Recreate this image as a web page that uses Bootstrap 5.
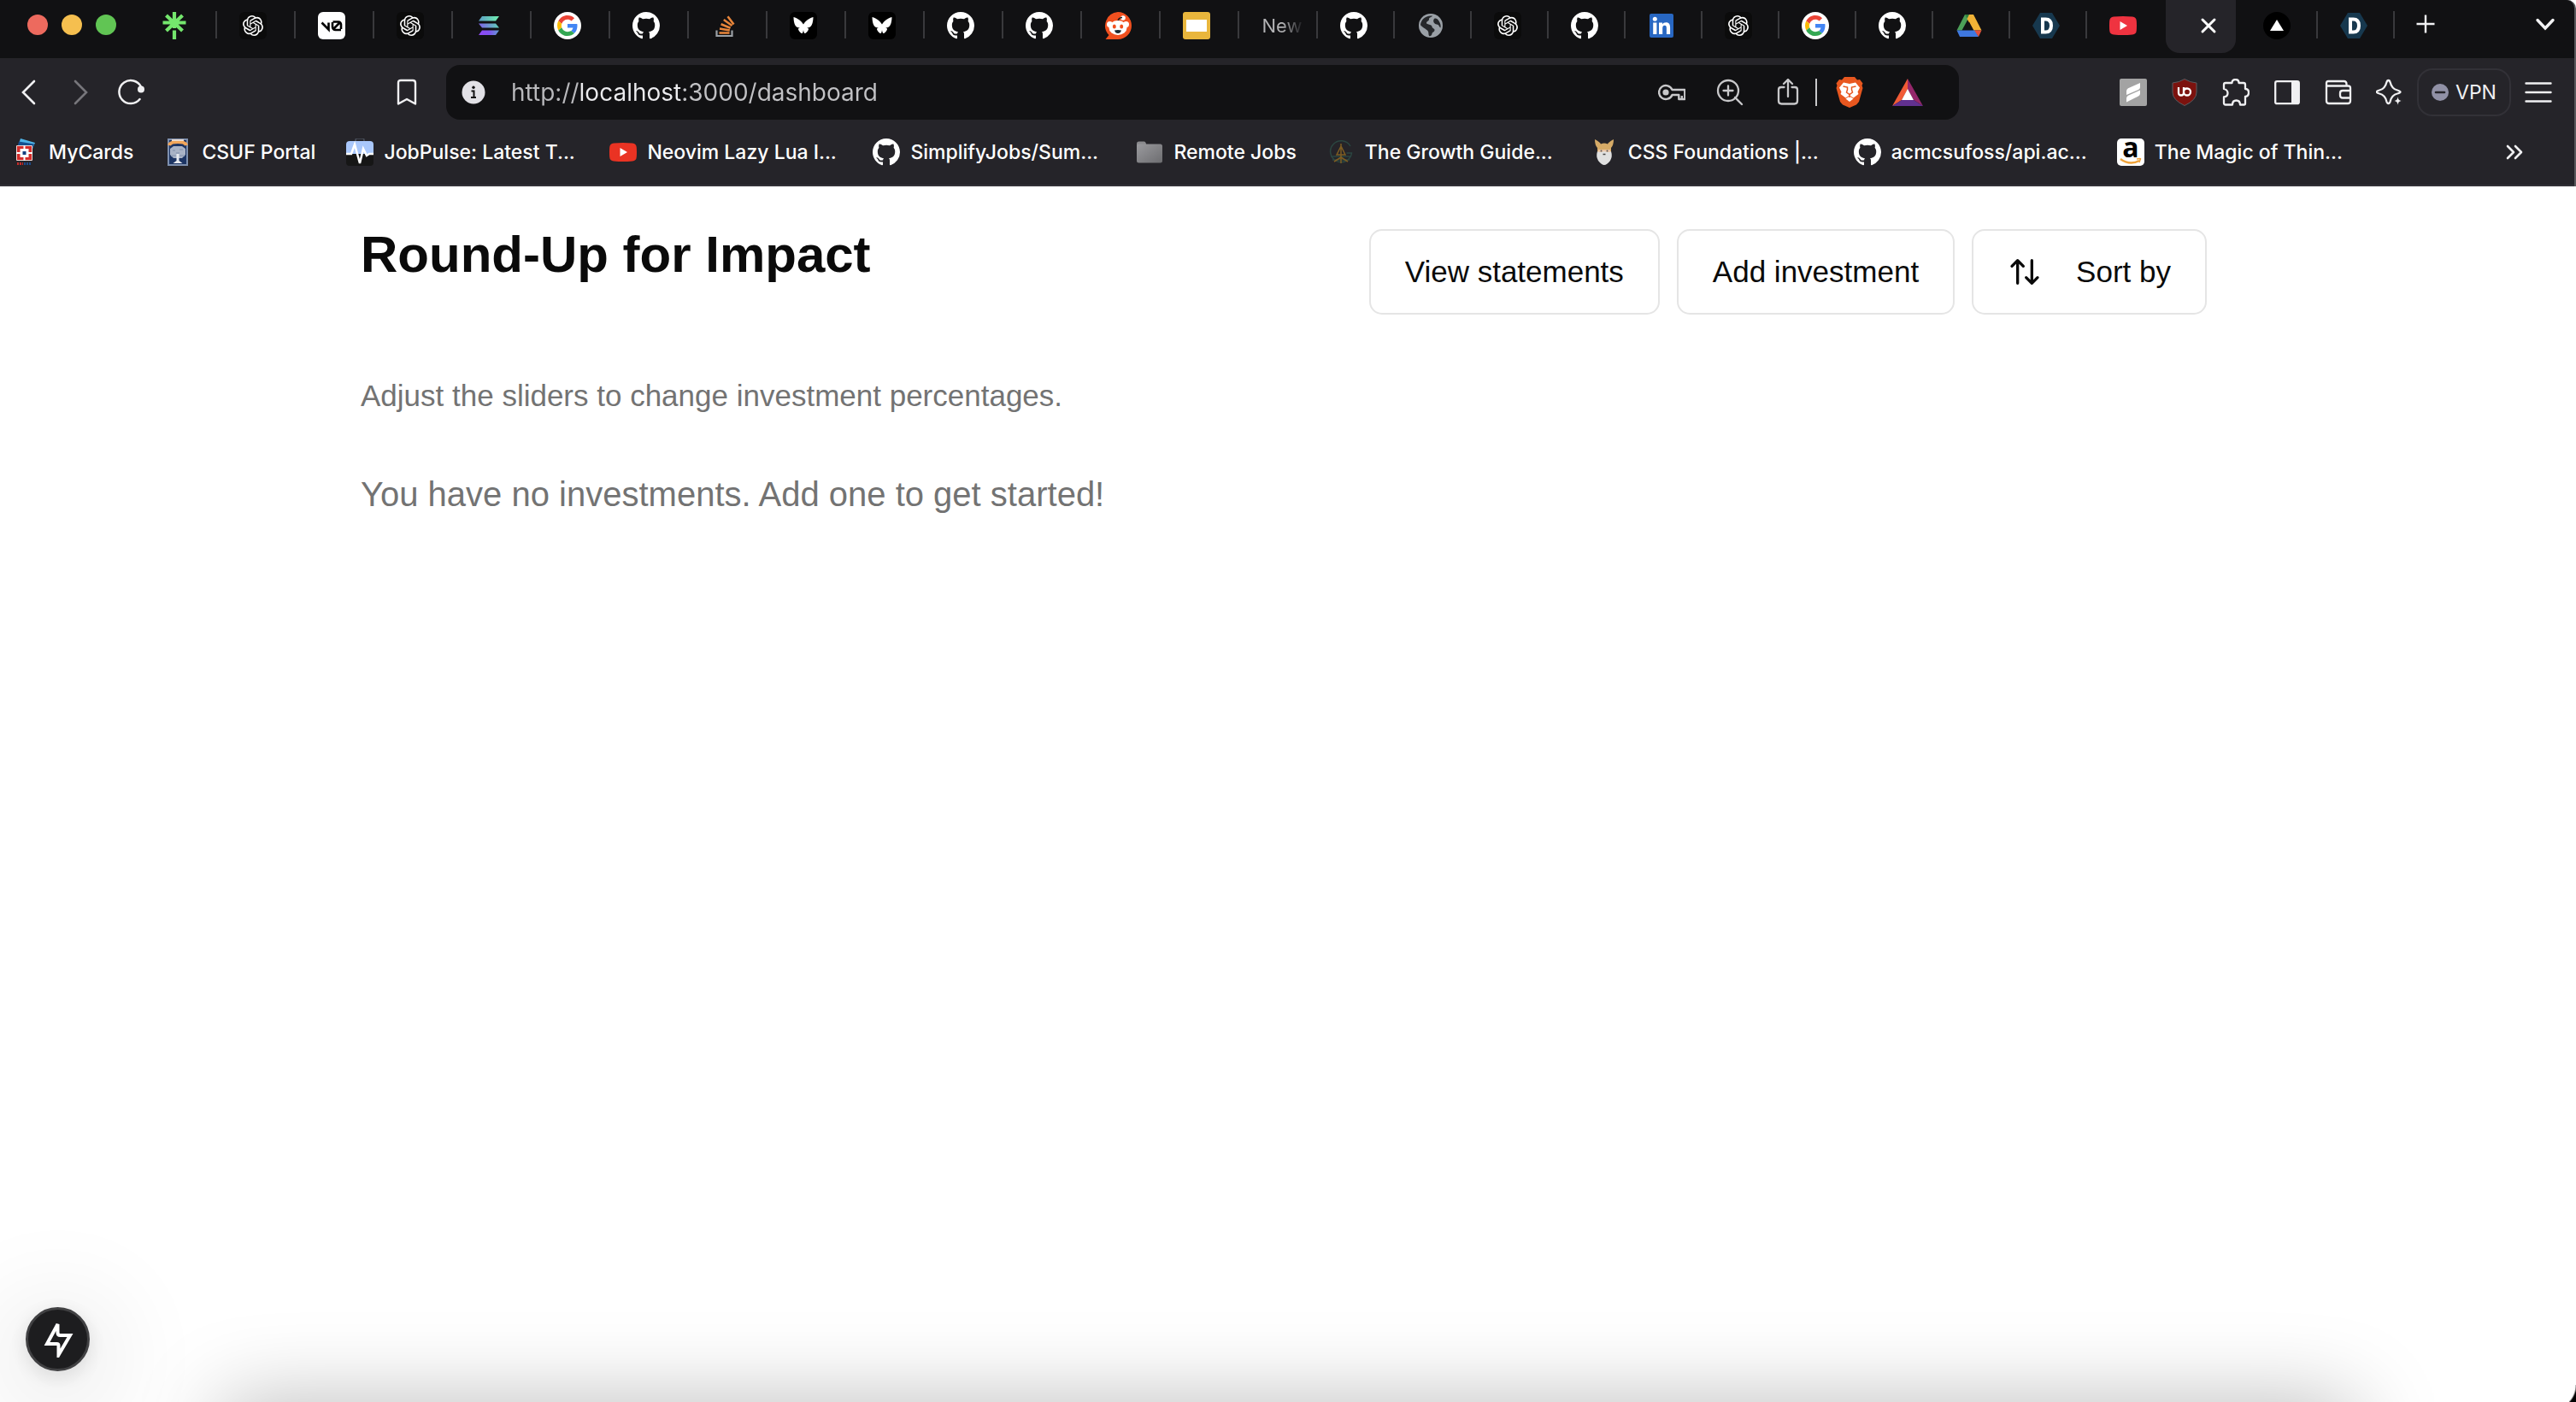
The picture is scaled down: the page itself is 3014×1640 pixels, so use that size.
<!DOCTYPE html>
<html lang="en">
<head>
<meta charset="utf-8">
<meta name="viewport" content="width=device-width, initial-scale=1">
<title>Round-Up for Impact</title>
<link href="https://cdn.jsdelivr.net/npm/bootstrap@5.3.0/dist/css/bootstrap.min.css" rel="stylesheet">
<style>
  body { font-family: "Liberation Sans", Arial, sans-serif; color: #0a0a0a; background: #fff; }
  .ico { width: 32px; height: 32px; flex: none; display: block; overflow: visible; }
  .ico-tall { height: 36px; }
  .ico-wide { width: 36px; }
  button { color: inherit; }
  .plain { background: none; border: 0; padding: 0; }

  /* browser chrome */
  .browser { font-family: Inter, Roboto, sans-serif; background: #252429; color: #f0f0f2; border-right: 2px solid #58585b; border-top-right-radius: 10px; border-bottom: 0; }
  .tabstrip { background: #111113; height: 68px; padding-left: 32px; border-top-right-radius: 10px; }
  .lights { gap: 16px; width: 130px; height: 58px; }
  .light { width: 24px; height: 24px; border-radius: 50%; }
  .light-red { background: #ed6a5e; }
  .light-amber { background: #f5bf4f; }
  .light-green { background: #61c554; }
  .tab { width: 92px; height: 60px; padding-right: 8px; flex: none; position: relative; }
  .tab.slim { width: 90px; padding-right: 6px; }
  .tab.titled { padding: 0 0 0 8px; }
  .tab::after { content: ""; position: absolute; right: 0; top: 13px; width: 2px; height: 32px; background: #39393c; }
  .tab.bare::after { display: none; }
  .tab-text { font-size: 22px; line-height: 32px; color: transparent; background: linear-gradient(90deg, #b4b4b6 50%, #29292c 95%); -webkit-background-clip: text; background-clip: text; }
  .tab.open { width: 82px; margin: 0 6px 0 2px; height: 62px; padding: 0 0 2px 18px; background: #252429; border-radius: 0 0 16px 16px; }
  .tab-tools { height: 56px; flex: 1; padding: 0 18px 0 20px; }

  .toolbar { height: 80px; padding: 0 26px 0 18px; }
  .nav-left { width: 504px; padding-right: 30px; }
  .nav-left button + button { margin-left: 28px; }
  .address { height: 64px; border-radius: 16px; background: #111113; padding: 0 42px 0 16px; min-width: 0; flex: 0 1 1770px; }
  .address input { flex: 1; min-width: 0; border: 0; outline: 0; padding: 0; margin-left: 28px; font-size: 28px; line-height: 40px; color: transparent; background: linear-gradient(90deg, #b9b9bc 80px, #ececef 80px, #ececef 199px, #c2c2c5 199px); -webkit-background-clip: text; background-clip: text; }
  .address .tools { gap: 36px; color: #c8c8ca; }
  .address .bar { width: 2px; height: 32px; background: #c8c8ca; margin: 0 22px 0 16px; }
  .address .badges { gap: 34px; }
  .exts { gap: 28px; }
  .vpn { width: 110px; height: 56px; border: 2px solid #323137; border-radius: 18px; font-size: 23px; gap: 8px; margin: 0 16px; }

  .bookmarks { height: 70px; padding: 0 54px 8px 13px; border-bottom: 2px solid #323137; }
  .mark-link { font-size: 23px; font-weight: 500; line-height: 32px; color: #fff; text-decoration: none; gap: 12px; padding-right: 36px; white-space: nowrap; flex: none; }
  .mark-link.long { width: 308px; padding-right: 0; }

  /* dashboard */
  .page { padding-right: 10px; }
  .sheet { width: 100%; max-width: 2160px; padding-top: 50px; }
  .headline { font-size: 60px; line-height: 60px; font-weight: 700; }
  .act { height: 100px; border: 2px solid #e5e5e5; border-radius: 15px; background: #fff; padding: 0 40px; font-size: 35px; line-height: 50px; color: #0a0a0a; }
  .act .ico { width: 40px; height: 40px; margin-right: 40px; }
  .acts { gap: 20px; }
  .hint { font-size: 35px; line-height: 50px; margin-top: 70px; }
  .empty { font-size: 40px; line-height: 60px; margin-top: 60px; }
  .hint, .empty { color: #737373; }

  /* overlays on the viewport edge */
  .dev { position: fixed; left: 30px; bottom: 36px; width: 75px; height: 75px; border-radius: 50%; border: 3px solid #414143; background: #1d1d1f; z-index: 3;
    box-shadow: 0 6px 24px rgba(0,0,0,.12), 0 22px 120px 30px rgba(0,0,0,.09); }
  .dev .ico { width: 42px; height: 42px; }
  .undershade { position: fixed; left: 270px; right: 270px; bottom: -100px; height: 90px; box-shadow: 0 0 100px 10px rgba(0,0,0,.27); }
  .corner { position: fixed; right: 0; bottom: 0; width: 8px; height: 20px; background: radial-gradient(circle at -21px 0, transparent 28px, #000 30px); }
</style>
<script src="https://cdn.jsdelivr.net/npm/bootstrap@5.3.0/dist/js/bootstrap.bundle.min.js"></script>
</head>
<body>

<svg width="0" height="0" class="position-absolute" aria-hidden="true">
  <defs>
    <linearGradient id="gs1" x1="0" y1="0" x2="1" y2="0"><stop offset="0" stop-color="#5c9dc4"/><stop offset="1" stop-color="#6ff0b0"/></linearGradient>
    <linearGradient id="gs2" x1="0" y1="0" x2="1" y2="0"><stop offset="0" stop-color="#7d62e8"/><stop offset="1" stop-color="#5fd0b8"/></linearGradient>
    <linearGradient id="gs3" x1="0" y1="0" x2="1" y2="0"><stop offset="0" stop-color="#9148f5"/><stop offset=".5" stop-color="#8050f0"/><stop offset="1" stop-color="#629cd0"/></linearGradient>
    <linearGradient id="gf" x1="0" y1="0" x2="1" y2="1"><stop offset="0" stop-color="#9a9a9e"/><stop offset="1" stop-color="#6d6d70"/></linearGradient>
  </defs>
  <symbol id="linktree" viewBox="0 0 32 32"><path d="M16 0v19M2.500 12.500h27M6.500 4l19 18M25.500 4l-19 18M16 21.500V32" fill="none" stroke="#74e66d" stroke-width="4.200"/></symbol>
  <symbol id="gpt" viewBox="0 0 32 32"><rect width="32" height="32" rx="6" fill="#0b0b0b"/><path transform="translate(4 4)" fill="#fff" d="M22.2819 9.8211a5.9847 5.9847 0 0 0-.5157-4.9108 6.0462 6.0462 0 0 0-6.5098-2.9A6.0651 6.0651 0 0 0 4.9807 4.1818a5.9847 5.9847 0 0 0-3.9977 2.9 6.0462 6.0462 0 0 0 .7427 7.0966 5.98 5.98 0 0 0 .511 4.9107 6.051 6.051 0 0 0 6.5146 2.9001A5.9847 5.9847 0 0 0 13.2599 24a6.0557 6.0557 0 0 0 5.7718-4.2058 5.9894 5.9894 0 0 0 3.9977-2.9001 6.0557 6.0557 0 0 0-.7475-7.0729zm-9.022 12.6081a4.4755 4.4755 0 0 1-2.8764-1.0408l.1419-.0804 4.7783-2.7582a.7948.7948 0 0 0 .3927-.6813v-6.7369l2.02 1.1686a.071.071 0 0 1 .038.052v5.5826a4.504 4.504 0 0 1-4.4945 4.4944zm-9.6607-4.1254a4.4708 4.4708 0 0 1-.5346-3.0137l.142.0852 4.783 2.7582a.7712.7712 0 0 0 .7806 0l5.8428-3.3685v2.3324a.0804.0804 0 0 1-.0332.0615L9.74 19.9502a4.4992 4.4992 0 0 1-6.1408-1.6464zM2.3408 7.8956a4.485 4.485 0 0 1 2.3655-1.9728V11.6a.7664.7664 0 0 0 .3879.6765l5.8144 3.3543-2.0201 1.1685a.0757.0757 0 0 1-.071 0l-4.8303-2.7865A4.504 4.504 0 0 1 2.3408 7.872zm16.5963 3.8558L13.1038 8.364 15.1192 7.2a.0757.0757 0 0 1 .071 0l4.8303 2.7913a4.4944 4.4944 0 0 1-.6765 8.1042v-5.6772a.79.79 0 0 0-.407-.667zm2.0107-3.0231l-.142-.0852-4.7735-2.7818a.7759.7759 0 0 0-.7854 0L9.409 9.2297V6.8974a.0662.0662 0 0 1 .0284-.0615l4.8303-2.7866a4.4992 4.4992 0 0 1 6.6802 4.66zM8.3065 12.863l-2.02-1.1638a.0804.0804 0 0 1-.038-.0567V6.0742a4.4992 4.4992 0 0 1 7.3757-3.4537l-.142.0805L8.704 5.459a.7948.7948 0 0 0-.3927.6813zm1.0976-2.3654l2.602-1.4998 2.6069 1.4998v2.9994l-2.5974 1.4997-2.6067-1.4997Z"/></symbol>
  <symbol id="vzero" viewBox="0 0 32 32"><rect width="32" height="32" rx="6" fill="#fff"/><path d="M4.500 12.500l8 8V12.500M17 12v5.500a3.500 3.500 0 0 0 3.500 3.500H27M17.500 11.500h6.500a3 3 0 0 1 3 3V20M17.500 20.500L26 12" fill="none" stroke="#000" stroke-width="2.600"/></symbol>
  <symbol id="solana" viewBox="0 0 32 32"><path d="M8 5h20l-4 5.500H4z" fill="url(#gs1)"/><path d="M4 13.500h20l4 5H8z" fill="url(#gs2)"/><path d="M8 21.500h20L24 27H4z" fill="url(#gs3)"/></symbol>
  <symbol id="google" viewBox="0 0 32 32"><circle cx="16" cy="16" r="16" fill="#fff"/><g transform="translate(4 4) scale(.5)"><path fill="#ea4335" d="M24 9.500c3.540 0 6.710 1.220 9.210 3.600l6.850-6.850C35.900 2.380 30.470 0 24 0 14.620 0 6.510 5.380 2.560 13.220l7.980 6.190C12.430 13.720 17.740 9.500 24 9.500z"/><path fill="#4285f4" d="M46.980 24.550c0-1.570-.15-3.090-.38-4.550H24v9.020h12.940c-.58 2.960-2.260 5.480-4.780 7.180l7.730 6c4.510-4.180 7.090-10.360 7.090-17.650z"/><path fill="#fbbc05" d="M10.530 28.590c-.48-1.450-.76-2.990-.76-4.590s.27-3.140.76-4.590l-7.980-6.190C.92 16.460 0 20.120 0 24s.92 7.540 2.560 10.780l7.970-6.190z"/><path fill="#34a853" d="M24 48c6.480 0 11.930-2.130 15.890-5.810l-7.730-6c-2.150 1.450-4.920 2.300-8.160 2.300-6.260 0-11.570-4.220-13.470-9.910l-7.980 6.190C6.510 42.620 14.620 48 24 48z"/></g></symbol>
  <symbol id="github" viewBox="0 0 16 16"><path fill="#fff" d="M8 0C3.580 0 0 3.580 0 8c0 3.540 2.290 6.530 5.470 7.590.4.070.55-.17.55-.38 0-.19-.01-.82-.01-1.490-2.010.37-2.530-.49-2.690-.94-.09-.23-.48-.94-.82-1.130-.28-.15-.68-.52-.01-.53.63-.01 1.080.58 1.230.82.72 1.210 1.870.87 2.330.66.07-.52.28-.87.51-1.070-1.780-.2-3.640-.89-3.640-3.950 0-.87.31-1.590.82-2.150-.08-.2-.36-1.020.08-2.120 0 0 .67-.21 2.200.82.64-.18 1.320-.27 2-.27s1.360.09 2 .27c1.530-1.040 2.200-.82 2.200-.82.44 1.100.16 1.920.08 2.120.51.56.82 1.270.82 2.150 0 3.070-1.870 3.750-3.650 3.950.29.25.54.73.54 1.480 0 1.070-.01 1.930-.01 2.200 0 .21.15.46.55.38A8.010 8.010 0 0 0 16 8c0-4.420-3.580-8-8-8z"/></symbol>
  <symbol id="stack" viewBox="0 0 32 32"><path d="M6.500 21.500V28h18v-6.500" fill="none" stroke="#9ba1a6" stroke-width="2.200"/><path d="M9.500 24.500h12M10 19.500l11.800 2M11.600 14.200l11 4.500M14.800 9l9.700 7M19.500 5.200l7 9.300" fill="none" stroke="#e8853a" stroke-width="2.600"/></symbol>
  <symbol id="bsky" viewBox="0 0 32 32"><rect width="32" height="32" rx="6" fill="#000"/><path fill="#fff" d="M16 14.500C14 11 9 7 4.500 6c0 4 1 11 4.500 12 1 .4 2 .4 3 .3-2 .7-2.500 1.700-1.500 3.200 1.500 2.500 3 3.800 4 3.500.8-.4 1.200-2 1.500-4 .3 2 .7 3.600 1.500 4 1 .3 2.500-1 4-3.500 1-1.500.5-2.500-1.500-3.200 1 .1 2 .1 3-.3 3.500-1 4.500-8 4.500-12C23 7 18 11 16 14.500z"/></symbol>
  <symbol id="reddit" viewBox="0 0 32 32"><path fill="#f0501f" d="M16 0a16 16 0 1 1 0 32H1.500l4-5A16 16 0 0 1 16 0z"/><circle cx="6.500" cy="14.500" r="3.500" fill="#fff"/><circle cx="25.500" cy="14.500" r="3.500" fill="#fff"/><circle cx="22" cy="7" r="2.800" fill="#fff"/><path d="M16 12c0-4 2-5.500 5-5.500" stroke="#222" stroke-width="1.500" fill="none"/><ellipse cx="16" cy="18.500" rx="10.500" ry="8.500" fill="#fff"/><ellipse cx="11.800" cy="17" rx="2" ry="2.600" fill="#f0501f"/><ellipse cx="20.200" cy="17" rx="2" ry="2.600" fill="#f0501f"/><path d="M12 21.500q4-1 8 0-1 3.500-4 3.500t-4-3.500z" fill="#1a2a32"/></symbol>
  <symbol id="slides" viewBox="0 0 32 32"><rect width="32" height="32" rx="3" fill="#e9b63c"/><path d="M4 9h24v14H4z" fill="#fff"/></symbol>
  <symbol id="globe" viewBox="0 0 32 32"><circle cx="16" cy="16" r="14" fill="#9aa0a6"/><path fill="#26282b" d="M18 4.500c-1 2-4 1.500-4 4s-3 2-3 4.500c0 2 6 1 6.500 4 0 2.500 3.500 2 3 4.500s-2.500 1.500-3 4-2 3-3.500 2.500c-1-2 0-4-1.500-6S5 17.500 4 15c.5-6 6-11.500 14-10.500zM20 8c2-1 4 0 5.500 2.500 2 3.500 2.500 5 2 8-2-1-1.500-4-4.500-4s-5-4-3-6.500z"/></symbol>
  <symbol id="linkedin" viewBox="0 0 32 32"><rect x="2" y="2" width="28" height="28" rx="2" fill="#2867c2"/><circle cx="8.300" cy="8.300" r="2.500" fill="#fff"/><path fill="#fff" d="M6.200 12.500h4.200V26H6.200zM13 12.500h4v1.900c.8-1.300 2.200-2.200 4.200-2.200 4 0 4.900 2.600 4.900 6.200V26h-4.200v-6.700c0-1.700-.2-3.500-2.200-3.500s-2.500 1.500-2.500 3.400V26H13z"/></symbol>
  <symbol id="drive" viewBox="0 0 32 32"><path fill="#4d9f58" d="M11 3h6.500L7.500 21.500h-6z"/><path fill="#2f7d3d" d="M11 3h10l-5 8z"/><path fill="#f0b236" d="M16 3h5l9.500 18.500H21L13.500 8z"/><path fill="#3f78e0" d="M1.500 21.500h21.500l4 7.500H5z"/><path fill="#e2503c" d="M22 21.500h8.500L27 29z"/><path fill="#111113" d="M16 11.500l5 9.500H11z"/></symbol>
  <symbol id="dhex" viewBox="0 0 32 32"><path fill="#17384e" d="M9 1h14l9 15-9 15H9L0 16z"/><path fill="none" stroke="#fff" stroke-width="4" d="M12 8.500h3.500q6.500 0 6.500 7.500t-6.500 7.500H12z"/></symbol>
  <symbol id="yt" viewBox="0 0 32 32"><path fill="#ef3340" d="M5 5.500q11-1 22 0 4.500.3 4.800 5 .4 5.500 0 11-.3 4.700-4.800 5-11 1-22 0-4.500-.3-4.800-5-.4-5.500 0-11 .3-4.700 4.800-5z"/><path fill="#fff" d="M12.500 11l8.500 5-8.500 5z"/></symbol>
  <symbol id="vercel" viewBox="0 0 32 32"><circle cx="16" cy="16" r="16" fill="#000"/><path fill="#fff" d="M16 9l8 13H8z"/></symbol>
  <symbol id="close" viewBox="0 0 32 32"><path d="M9 9l14 14M23 9L9 23" fill="none" stroke="#fff" stroke-width="3" stroke-linecap="round"/></symbol>
  <symbol id="plus" viewBox="0 0 32 32"><path d="M16 5.500v21M5.500 16h21" stroke="#f2f2f4" stroke-width="2.400" fill="none"/></symbol>
  <symbol id="down" viewBox="0 0 32 32"><path d="M7 11.500l9 9.500 9-9.500" stroke="#f2f2f4" stroke-width="3.400" fill="none" stroke-linecap="round"/></symbol>

  <symbol id="back" viewBox="0 0 32 32"><path d="M22 3L9 16l13 13" stroke="#f0f0f2" stroke-width="2.600" fill="none" stroke-linecap="round"/></symbol>
  <symbol id="fwd" viewBox="0 0 32 32"><path d="M10 3l13 13-13 13" stroke="#77767b" stroke-width="2.600" fill="none" stroke-linecap="round"/></symbol>
  <symbol id="reload" viewBox="0 0 32 32"><path d="M25.500 24A13.500 13.500 0 1 1 27 9.500" stroke="#f0f0f2" stroke-width="2.500" fill="none" stroke-linecap="round"/><circle cx="27" cy="12.500" r="4" fill="#f0f0f2"/></symbol>
  <symbol id="flag" viewBox="0 0 32 32"><path d="M6 5q0-3 3-3h14q3 0 3 3v24.500L16 24 6 29.500z" stroke="#f0f0f2" stroke-width="2.400" fill="none" stroke-linejoin="round"/></symbol>
  <symbol id="info" viewBox="0 0 32 32"><circle cx="16" cy="16" r="13.500" fill="#e2e1e6"/><circle cx="16" cy="10.200" r="1.700" fill="#111"/><path d="M13.500 14.500h3v7M13 22h6" stroke="#111" stroke-width="2" fill="none"/></symbol>
  <symbol id="key" viewBox="0 0 32 32"><g fill="none" stroke="currentColor" stroke-width="2.400" stroke-linejoin="round"><path d="M16.500 13h14.800v11h-7v-5h-7.800A8 8 0 1 1 16.500 13z"/><path d="M27.800 20v4" /></g><circle cx="9" cy="16" r="3.600" fill="currentColor"/></symbol>
  <symbol id="zoomin" viewBox="0 0 32 32"><path d="M22 22l8 8M14 8.500v11M8.500 14h11" stroke="currentColor" stroke-width="2.300" fill="none" stroke-linecap="round"/><circle cx="14" cy="14" r="12" stroke="currentColor" stroke-width="2.300" fill="none"/></symbol>
  <symbol id="share" viewBox="0 0 32 32"><path d="M11.500 10H8q-3 0-3 3v13q0 3.500 3.500 3.500h15q3.500 0 3.500-3.500V13q0-3-3-3h-3.500M16 21V1.500M11 6l5-5 5 5" stroke="currentColor" stroke-width="2.300" fill="none" stroke-linecap="round" stroke-linejoin="round"/></symbol>
  <symbol id="brave" viewBox="0 0 32 36"><path fill="#e8571f" d="M10 0h12l3 3.500 3-.5 3.500 4.500-1 2.500 1 3-4.500 16-3 3.500L16 36l-8-3.500L5 29 .5 13l1-3-1-2.500L4 3l3 .5z"/><path fill="#fff" d="M9 6.500L16 8l7-1.500 5 6-2.500 5 1 2.500-6 4.500L16 21.500 11.500 24.500l-6-4.500 1-2.500-2.500-5z"/><path fill="#fff" d="M16 22.500l4.500 3-4.500 3.500-4.500-3.500z"/><path d="M8.500 11l5 1v3l-1 3 3.500 2.500 3.500-2.500-1-3v-3l5-1M16 20.500v3.500" fill="none" stroke="#e8571f" stroke-width="1.500"/></symbol>
  <symbol id="bat" viewBox="0 0 36 32"><path fill="#f15b36" d="M18 0v12.500L11 25 0 32z"/><path fill="#94276a" d="M18 0l18 32-11-7-7-12.500z"/><path fill="#61308f" d="M0 32l11-7h14l11 7z"/><path fill="#fff" d="M18 12l7 13H11z"/></symbol>
  <symbol id="simplify" viewBox="0 0 32 32"><rect width="32" height="32" rx="2" fill="#a3a3a3"/><path fill="#fff" d="M8 14.500q0-2 2-3.200L24 5v5q0 2-2 3L8 19zM8 23q0-2 2-3.200L24 13.500v4q0 2-2 3L8 27.500z"/></symbol>
  <symbol id="ublock" viewBox="0 0 32 32"><path fill="#7c120e" stroke="#5c5c60" stroke-width="1" d="M16 .5q6.500 4 14 4.500v11q0 9-14 15.500Q2 25 2 16V5q7.500-.5 14-4.500z"/><path d="M9 10v6.500q0 3 3 3t3-3V10M15 15.500a4 4 0 1 0 4-4q-4 0-4 4" fill="none" stroke="#fff" stroke-width="2.300"/></symbol>
  <symbol id="puzzle" viewBox="0 0 32 32"><path d="M4 5h7.500q0-4 4-4t4 4H25q2 0 2 2v5q4 0 4 4.300T27 21v8q0 1.500-1.500 1.500h-4.500q0-5-4.500-5t-4.500 5H4q-2 0-2-2v-7q4.500-.5 4.500-4.500T2 12V7q0-2 2-2z" fill="none" stroke="#f0f0f2" stroke-width="2.300" stroke-linejoin="round"/></symbol>
  <symbol id="sidebar" viewBox="0 0 32 32"><rect x="2.200" y="3.200" width="27.600" height="26" rx="2" fill="none" stroke="#f0f0f2" stroke-width="2.300"/><path d="M21 3h9v26h-9z" fill="#f0f0f2"/></symbol>
  <symbol id="wallet" viewBox="0 0 32 32"><g fill="none" stroke="#f0f0f2" stroke-width="2.300" stroke-linejoin="round"><path d="M25.500 8.500V6q0-3-3-3H4Q2 3 2 5v21q0 3 3 3h22q3 0 3-3V11q0-2.500-2.500-2.500H2"/><path d="M30 14h-9q-3 0-3 3v2.500q0 3 3 3h9"/></g></symbol>
  <symbol id="spark" viewBox="0 0 32 32"><path d="M14.500 2q1.500 0 2.200 2.500Q18.500 12 25 13.500q3.500 1 3.500 2t-3.500 2q-6.500 1.500-8.300 9Q16 29 14.500 29t-2.200-2.500Q10.500 19 4 17.500q-3.500-1-3.500-2t3.500-2q6.500-1.500 8.300-9Q13 2 14.500 2z" fill="none" stroke="#f0f0f2" stroke-width="2.300"/><path d="M25.500 20.500l1.500 4 4 1.500-4 1.500-1.500 4-1.500-4-4-1.500 4-1.500z" fill="#f0f0f2" stroke="#252429" stroke-width="1"/></symbol>
  <symbol id="minus" viewBox="0 0 20 20"><circle cx="10" cy="10" r="10" fill="#9191a6"/><path d="M5 10h10" stroke="#252429" stroke-width="2.600" stroke-linecap="round"/></symbol>
  <symbol id="menu" viewBox="0 0 32 32"><path d="M1.500 5.500h29M1.500 16h29M1.500 26.500h29" stroke="#f0f0f2" stroke-width="2.400" stroke-linecap="round"/></symbol>

  <symbol id="mycards" viewBox="0 0 32 32"><path fill="#4fb4e8" d="M11 0l17 5-6 14L7 12z"/><path fill="#14508f" d="M9 3.500l18 3L22 20 7 14z"/><path fill="#d32d2b" stroke="#f1d6d2" stroke-width="1" d="M6.500 8.500h18v17h-18z"/><path d="M15.500 8v18M6 17h19" stroke="#fff" stroke-width="2"/><path fill="#16407f" stroke="#fff" stroke-width="3" d="M12 13.500h7v7h-7z"/><path d="M7 29.500h7" stroke="#c92a28" stroke-width="3" stroke-dasharray="2 1"/><path d="M15 29.500h9" stroke="#1c4a8a" stroke-width="3" stroke-dasharray="2 1"/></symbol>
  <symbol id="csuf" viewBox="0 0 32 32"><path fill="#1d3564" d="M4 1h24v31H4z"/><path d="M5 1h22v30H5z" fill="none" stroke="#7d8fae" stroke-width="2"/><path d="M6 8q1-4 10-4t10 4" fill="none" stroke="#f2a65a" stroke-width="4"/><path d="M9 2h14" stroke="#e9d9cc" stroke-width="2"/><path d="M7 12l4-3h10l4 3v7l-4 4H11l-4-4z" fill="#a9b3c6"/><path d="M8 20h6M18 20h6M10 14h3M18 13h4M14 17h4" stroke="#94a1b8" stroke-width="2"/><path d="M14.500 18h3v8l4 3h-11l4-3z" fill="#e6e9ef"/></symbol>
  <symbol id="pulse" viewBox="0 0 32 32"><path d="M11 4V2q0-2 2-2h6q2 0 2 2v2" fill="none" stroke="#4a4f5a" stroke-width="1.500"/><rect y="3" width="32" height="29" rx="4" fill="#161616"/><path fill="#a9c7fb" d="M4 3h24q4 0 4 4v11H0V7q0-4 4-4z"/><path d="M0 18h6l4-11 6 22 4-17 4 8 3-2h5" fill="none" stroke="#fff" stroke-width="2.500"/></symbol>
  <symbol id="ytb" viewBox="0 0 32 32"><path fill="#ea3323" d="M5 5.500q11-1 22 0 4.500.3 4.800 5 .4 5.500 0 11-.3 4.700-4.800 5-11 1-22 0-4.500-.3-4.800-5-.4-5.500 0-11 .3-4.700 4.800-5z"/><path fill="#fff" d="M12.500 11l8.500 5-8.500 5z"/></symbol>
  <symbol id="folder" viewBox="0 0 32 32"><path fill="#8a8a8d" d="M1 6q0-2.500 2.500-2.500h6q2 0 2.500 3V10H1z"/><rect x="1" y="6.500" width="30" height="22" rx="2.500" fill="url(#gf)"/></symbol>
  <symbol id="growth" viewBox="0 0 32 32"><path d="M27 9A12.500 12.500 0 1 0 28.500 17h-6M4 21h24M6 25h20" fill="none" stroke="#2b4641" stroke-width="1.500"/><path d="M16 6v23M16 9l-5 10h10zM8 27l8-5 8 5" fill="none" stroke="#7d5c22" stroke-width="1.500"/></symbol>
  <symbol id="odin" viewBox="0 0 32 32"><path fill="#d6ab67" d="M5 1q6 3 7 5.500 4-2 8 0Q21 4 27 1q0 7-3 10v5H8v-5Q5 8 5 1z"/><path fill="#ecc7a8" d="M9 13h14v6H9z"/><path fill="#e0e0e0" d="M8 15q3 2 8 0 5 2 8 0 2 6-1 11-4 5-7 5t-7-5q-3-5-1-11z"/><circle cx="12.500" cy="14.500" r="1" fill="#555"/><circle cx="19.500" cy="14.500" r="1" fill="#555"/><path d="M14.500 18.500h3" stroke="#444" stroke-width="1.500"/></symbol>
  <symbol id="more" viewBox="0 0 32 32"><path d="M8 9l7 7-7 7M17 9l7 7-7 7" fill="none" stroke="#f0f0f2" stroke-width="2.600" stroke-linecap="round" stroke-linejoin="round"/></symbol>
  <symbol id="sort" viewBox="0 0 24 24"><path d="M3 8l4-4 4 4M7 4v16M21 16l-4 4-4-4M17 20V4" fill="none" stroke="#0a0a0a" stroke-width="2" stroke-linecap="round" stroke-linejoin="round"/></symbol>
  <symbol id="bolt" viewBox="0 0 42 42"><path d="M20.500 3L8 26h11.500q2 0 2 2v11L35 16H23.500q-3 0-3-3z" fill="none" stroke="#fff" stroke-width="4"/></symbol>
</svg>

<header class="browser">
  <div class="tabstrip d-flex" role="tablist" aria-label="Tabs">
    <div class="lights d-flex align-items-center"><span class="light light-red"></span><span class="light light-amber"></span><span class="light light-green"></span></div>
    <button class="plain tab d-flex align-items-center justify-content-center"><svg class="ico"><use href="#linktree"/></svg></button>
    <button class="plain tab d-flex align-items-center justify-content-center"><svg class="ico"><use href="#gpt"/></svg></button>
    <button class="plain tab d-flex align-items-center justify-content-center"><svg class="ico"><use href="#vzero"/></svg></button>
    <button class="plain tab d-flex align-items-center justify-content-center"><svg class="ico"><use href="#gpt"/></svg></button>
    <button class="plain tab d-flex align-items-center justify-content-center"><svg class="ico"><use href="#solana"/></svg></button>
    <button class="plain tab d-flex align-items-center justify-content-center"><svg class="ico"><use href="#google"/></svg></button>
    <button class="plain tab d-flex align-items-center justify-content-center"><svg class="ico"><use href="#github"/></svg></button>
    <button class="plain tab d-flex align-items-center justify-content-center"><svg class="ico"><use href="#stack"/></svg></button>
    <button class="plain tab d-flex align-items-center justify-content-center"><svg class="ico"><use href="#bsky"/></svg></button>
    <button class="plain tab d-flex align-items-center justify-content-center"><svg class="ico"><use href="#bsky"/></svg></button>
    <button class="plain tab d-flex align-items-center justify-content-center"><svg class="ico"><use href="#github"/></svg></button>
    <button class="plain tab d-flex align-items-center justify-content-center"><svg class="ico"><use href="#github"/></svg></button>
    <button class="plain tab d-flex align-items-center justify-content-center"><svg class="ico"><use href="#reddit"/></svg></button>
    <button class="plain tab d-flex align-items-center justify-content-center"><svg class="ico"><use href="#slides"/></svg></button>
    <button class="plain tab titled d-flex align-items-center justify-content-center"><span class="tab-text">New</span></button>
    <button class="plain tab slim d-flex align-items-center justify-content-center"><svg class="ico"><use href="#github"/></svg></button>
    <button class="plain tab slim d-flex align-items-center justify-content-center"><svg class="ico"><use href="#globe"/></svg></button>
    <button class="plain tab slim d-flex align-items-center justify-content-center"><svg class="ico"><use href="#gpt"/></svg></button>
    <button class="plain tab slim d-flex align-items-center justify-content-center"><svg class="ico"><use href="#github"/></svg></button>
    <button class="plain tab slim d-flex align-items-center justify-content-center"><svg class="ico"><use href="#linkedin"/></svg></button>
    <button class="plain tab slim d-flex align-items-center justify-content-center"><svg class="ico"><use href="#gpt"/></svg></button>
    <button class="plain tab slim d-flex align-items-center justify-content-center"><svg class="ico"><use href="#google"/></svg></button>
    <button class="plain tab slim d-flex align-items-center justify-content-center"><svg class="ico"><use href="#github"/></svg></button>
    <button class="plain tab slim d-flex align-items-center justify-content-center"><svg class="ico"><use href="#drive"/></svg></button>
    <button class="plain tab slim d-flex align-items-center justify-content-center"><svg class="ico"><use href="#dhex"/></svg></button>
    <button class="plain tab slim bare d-flex align-items-center justify-content-center"><svg class="ico"><use href="#yt"/></svg></button>
    <button class="plain tab open bare d-flex align-items-center justify-content-center" aria-label="Close tab"><svg class="ico"><use href="#close"/></svg></button>
    <button class="plain tab slim d-flex align-items-center justify-content-center"><svg class="ico"><use href="#vercel"/></svg></button>
    <button class="plain tab slim d-flex align-items-center justify-content-center"><svg class="ico"><use href="#dhex"/></svg></button>
    <div class="tab-tools d-flex align-items-center justify-content-between">
      <button class="plain" aria-label="New tab"><svg class="ico"><use href="#plus"/></svg></button>
      <button class="plain" aria-label="Search tabs"><svg class="ico"><use href="#down"/></svg></button>
    </div>
  </div>

  <div class="toolbar d-flex align-items-center">
    <div class="nav-left d-flex align-items-center flex-shrink-0">
      <button class="plain" aria-label="Back"><svg class="ico"><use href="#back"/></svg></button>
      <button class="plain" aria-label="Forward"><svg class="ico"><use href="#fwd"/></svg></button>
      <button class="plain" aria-label="Reload"><svg class="ico"><use href="#reload"/></svg></button>
      <button class="plain ms-auto" aria-label="Bookmark this page"><svg class="ico"><use href="#flag"/></svg></button>
    </div>
    <div class="address d-flex align-items-center">
      <svg class="ico"><use href="#info"/></svg>
      <input type="text" aria-label="Address" value="http://localhost:3000/dashboard">
      <div class="tools d-flex align-items-center">
        <button class="plain" aria-label="Passwords"><svg class="ico"><use href="#key"/></svg></button>
        <button class="plain" aria-label="Zoom"><svg class="ico"><use href="#zoomin"/></svg></button>
        <button class="plain" aria-label="Share"><svg class="ico"><use href="#share"/></svg></button>
      </div>
      <span class="bar"></span>
      <div class="badges d-flex align-items-center">
        <button class="plain" aria-label="Shields"><svg class="ico ico-tall"><use href="#brave"/></svg></button>
        <button class="plain" aria-label="Rewards"><svg class="ico ico-wide"><use href="#bat"/></svg></button>
      </div>
    </div>
    <div class="exts d-flex align-items-center ms-auto">
      <button class="plain" aria-label="Simplify"><svg class="ico"><use href="#simplify"/></svg></button>
      <button class="plain" aria-label="uBlock Origin"><svg class="ico"><use href="#ublock"/></svg></button>
      <button class="plain" aria-label="Extensions"><svg class="ico"><use href="#puzzle"/></svg></button>
      <button class="plain" aria-label="Sidebar"><svg class="ico"><use href="#sidebar"/></svg></button>
      <button class="plain" aria-label="Wallet"><svg class="ico"><use href="#wallet"/></svg></button>
      <button class="plain" aria-label="Assistant"><svg class="ico"><use href="#spark"/></svg></button>
    </div>
    <button class="plain vpn d-flex align-items-center justify-content-center"><svg width="20" height="20"><use href="#minus"/></svg>VPN</button>
    <button class="plain" aria-label="Menu"><svg class="ico"><use href="#menu"/></svg></button>
  </div>

  <nav class="bookmarks d-flex align-items-center" aria-label="Bookmarks">
    <a href="#" class="mark-link d-flex align-items-center"><svg class="ico"><use href="#mycards"/></svg>MyCards</a>
    <a href="#" class="mark-link d-flex align-items-center"><svg class="ico"><use href="#csuf"/></svg>CSUF Portal</a>
    <a href="#" class="mark-link long d-flex align-items-center"><svg class="ico"><use href="#pulse"/></svg>JobPulse: Latest T...</a>
    <a href="#" class="mark-link long d-flex align-items-center"><svg class="ico"><use href="#ytb"/></svg>Neovim Lazy Lua I...</a>
    <a href="#" class="mark-link long d-flex align-items-center"><svg class="ico"><use href="#github"/></svg>SimplifyJobs/Sum...</a>
    <a href="#" class="mark-link d-flex align-items-center"><svg class="ico"><use href="#folder"/></svg>Remote Jobs</a>
    <a href="#" class="mark-link long d-flex align-items-center"><svg class="ico"><use href="#growth"/></svg>The Growth Guide...</a>
    <a href="#" class="mark-link long d-flex align-items-center"><svg class="ico"><use href="#odin"/></svg>CSS Foundations |...</a>
    <a href="#" class="mark-link long d-flex align-items-center"><svg class="ico"><use href="#github"/></svg>acmcsufoss/api.ac...</a>
    <a href="#" class="mark-link long d-flex align-items-center"><svg class="ico" viewBox="0 0 32 32"><rect width="32" height="32" rx="5" fill="#fff"/><text x="16" y="22" text-anchor="middle" font-family="Open Sans, sans-serif" font-weight="700" font-size="32" fill="#000">a</text><path d="M4 24q11 8 22 2" fill="none" stroke="#f0a33a" stroke-width="2.400"/><path d="M23 24q5-1 4.500 0t-1.500 4" fill="none" stroke="#f0a33a" stroke-width="1.500"/></svg>The Magic of Thin...</a>
    <button class="plain ms-auto" aria-label="More bookmarks"><svg class="ico"><use href="#more"/></svg></button>
  </nav>
</header>

<main class="page">
  <div class="sheet mx-auto">
    <div class="d-flex justify-content-between align-items-start">
      <h1 class="headline mb-0">Round-Up for Impact</h1>
      <div class="acts d-flex">
        <button class="act">View statements</button>
        <button class="act">Add investment</button>
        <button class="act d-flex align-items-center"><svg class="ico"><use href="#sort"/></svg>Sort by</button>
      </div>
    </div>
    <p class="hint mb-0">Adjust the sliders to change investment percentages.</p>
    <p class="empty mb-0">You have no investments. Add one to get started!</p>
  </div>
</main>

<div class="undershade"></div>
<button class="dev d-flex align-items-center justify-content-center p-0" aria-label="Dev tools"><svg class="ico"><use href="#bolt"/></svg></button>
<div class="corner"></div>
</body>
</html>
